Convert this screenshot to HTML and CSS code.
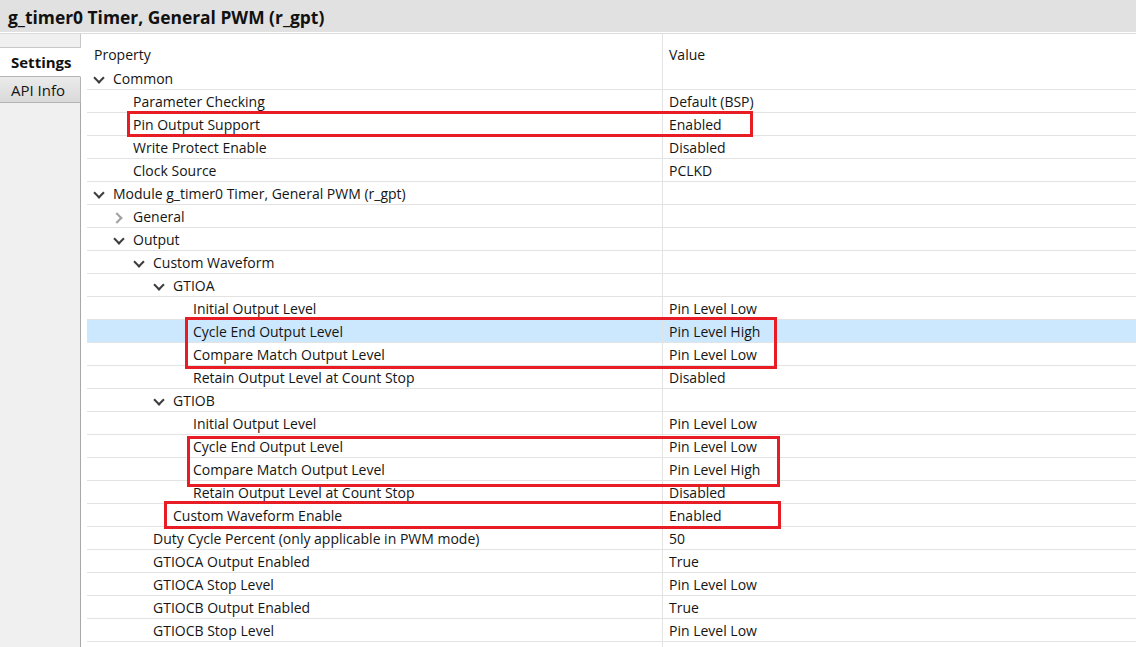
FILE: index.html
```html
<!DOCTYPE html>
<html>
<head>
<meta charset="utf-8">
<link rel="stylesheet" href="styles.css">
</head>
<body>
<div class="page">
  <div class="title">g_timer0 Timer, General PWM (r_gpt)</div>
  <div class="main">
    <div class="sidebar">
      <div class="tab-top"></div>
      <div class="tab active">Settings</div>
      <div class="tab">API Info</div>
      <div class="tab-rest"></div>
    </div>
    <div class="table">
      <div class="row head"><div class="prop">Property</div><div class="val">Value</div></div>
      <div class="row"><div class="prop l0"><span class="arr down"></span>Common</div><div class="val"></div></div>
      <div class="row"><div class="prop l1">Parameter Checking</div><div class="val">Default (BSP)</div></div>
      <div class="row"><div class="prop l1">Pin Output Support</div><div class="val">Enabled</div></div>
      <div class="row"><div class="prop l1">Write Protect Enable</div><div class="val">Disabled</div></div>
      <div class="row"><div class="prop l1">Clock Source</div><div class="val">PCLKD</div></div>
      <div class="row"><div class="prop l0"><span class="arr down"></span>Module g_timer0 Timer, General PWM (r_gpt)</div><div class="val"></div></div>
      <div class="row"><div class="prop l1"><span class="arr right"></span>General</div><div class="val"></div></div>
      <div class="row"><div class="prop l1"><span class="arr down"></span>Output</div><div class="val"></div></div>
      <div class="row"><div class="prop l2"><span class="arr down"></span>Custom Waveform</div><div class="val"></div></div>
      <div class="row"><div class="prop l3"><span class="arr down"></span>GTIOA</div><div class="val"></div></div>
      <div class="row"><div class="prop l4">Initial Output Level</div><div class="val">Pin Level Low</div></div>
      <div class="row sel"><div class="prop l4">Cycle End Output Level</div><div class="val">Pin Level High</div></div>
      <div class="row"><div class="prop l4">Compare Match Output Level</div><div class="val">Pin Level Low</div></div>
      <div class="row"><div class="prop l4">Retain Output Level at Count Stop</div><div class="val">Disabled</div></div>
      <div class="row"><div class="prop l3"><span class="arr down"></span>GTIOB</div><div class="val"></div></div>
      <div class="row"><div class="prop l4">Initial Output Level</div><div class="val">Pin Level Low</div></div>
      <div class="row"><div class="prop l4">Cycle End Output Level</div><div class="val">Pin Level Low</div></div>
      <div class="row"><div class="prop l4">Compare Match Output Level</div><div class="val">Pin Level High</div></div>
      <div class="row"><div class="prop l4">Retain Output Level at Count Stop</div><div class="val">Disabled</div></div>
      <div class="row"><div class="prop l3">Custom Waveform Enable</div><div class="val">Enabled</div></div>
      <div class="row"><div class="prop l2">Duty Cycle Percent (only applicable in PWM mode)</div><div class="val">50</div></div>
      <div class="row"><div class="prop l2">GTIOCA Output Enabled</div><div class="val">True</div></div>
      <div class="row"><div class="prop l2">GTIOCA Stop Level</div><div class="val">Pin Level Low</div></div>
      <div class="row"><div class="prop l2">GTIOCB Output Enabled</div><div class="val">True</div></div>
      <div class="row"><div class="prop l2">GTIOCB Stop Level</div><div class="val">Pin Level Low</div></div>
      <div class="row filler"><div class="prop"></div><div class="val"></div></div>
    </div>
  </div>
  <div class="mark m1"></div>
  <div class="mark m2"></div>
  <div class="mark m3"></div>
  <div class="mark m4"></div>
</div>
</body>
</html>
```

FILE: styles.css
```css
html, body {
  margin: 0;
  padding: 0;
  background: #ffffff;
  overflow: hidden;
}
.page {
  position: relative;
  width: 1136px;
  height: 647px;
  font-family: "Open Sans", "Noto Sans", sans-serif;
  font-size: 14px;
  color: #151515;
}
.title {
  height: 32px;
  background: #e1e1e1;
  font-weight: bold;
  font-size: 17.4px;
  line-height: 35px;
  padding-left: 8px;
  color: #111;
  border-bottom: 1px solid #ffffff;
  box-shadow: 0 1px 0 #dcdcdc;
}
.main {
  display: flex;
  margin-top: 1px;
  height: 613px;
}
.sidebar {
  width: 81px;
  display: flex;
  flex-direction: column;
  background: #f0f0f0;
}
.tab-top {
  height: 13px;
  border-right: 1px solid #c8c8c8;
  border-bottom: 1px solid #c8c8c8;
  background: #f0f0f0;
}
.tab {
  height: 25px;
  line-height: 26px;
  padding-left: 11px;
  font-size: 15px;
  border-right: 1px solid #b4b4b4;
  border-bottom: 1px solid #b4b4b4;
  background: linear-gradient(#ebebeb, #d9d9d9);
}
.tab.active {
  height: 28px;
  line-height: 29px;
  background: #ffffff;
  font-weight: bold;
  border-right: 1px solid #ffffff;
  color: #111;
}
.tab-rest {
  flex: 1;
  border-right: 1px solid #a8a8a8;
  background: #f0f0f0;
}
.table {
  flex: 1;
  padding-left: 6px;
  background: #fff;
}
.row {
  display: grid;
  grid-template-columns: 575px 1fr;
  height: 22px;
  line-height: 24px;
  border-bottom: 1px solid #e3e3e3;
  white-space: nowrap;
}
.row.head {
  height: 33px;
  border-bottom: none;
}
.row.head .prop, .row.head .val {
  padding-top: 9px;
}
.row.sel {
  background: #cce8ff;
}
.row.filler {
  height: 6px;
  border-bottom: none;
}
.prop {
  display: flex;
  align-items: center;
  padding-left: 7px;
}
.row.head .prop { align-items: flex-start; }
.val {
  border-left: 1px solid #e3e3e3;
  padding-left: 6px;
}
.l0 { padding-left: 6px; }
.l1 { padding-left: 46px; }
.l2 { padding-left: 66px; }
.l3 { padding-left: 86px; }
.l4 { padding-left: 106px; }
.l1:has(.arr) { padding-left: 26px; }
.l2:has(.arr) { padding-left: 46px; }
.l3:has(.arr) { padding-left: 66px; }
.arr {
  display: inline-block;
  flex: none;
  width: 20px;
  height: 22px;
  position: relative;
}
.arr::before {
  content: "";
  position: absolute;
  width: 6px;
  height: 6px;
  border-right: 2px solid #3c3c3c;
  border-bottom: 2px solid #3c3c3c;
}
.arr.down::before {
  left: 2px;
  top: 6px;
  transform: rotate(45deg);
}
.arr.right::before {
  left: 0px;
  top: 8px;
  transform: rotate(-45deg);
  border-color: #a0a0a0;
}
.mark {
  position: absolute;
  border: 3px solid #e81c24;
  box-sizing: border-box;
}
.m1 { left: 127px; top: 111px; width: 626px; height: 26px; }
.m2 { left: 185px; top: 317px; width: 592px; height: 52px; }
.m3 { left: 187px; top: 436px; width: 593px; height: 51px; }
.m4 { left: 164px; top: 501px; width: 617px; height: 28px; }
```
